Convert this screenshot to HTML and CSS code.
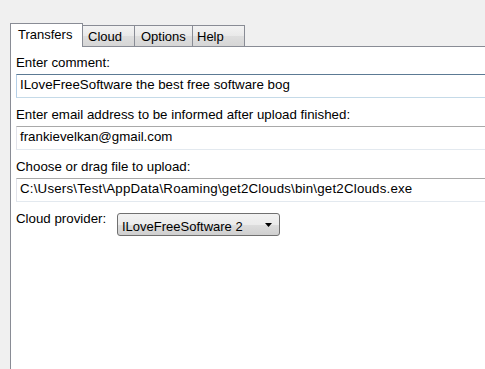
FILE: index.html
```html
<!DOCTYPE html>
<html>
<head>
<meta charset="utf-8">
<link rel="stylesheet" href="styles.css">
</head>
<body>
<div class="window">
  <div class="tabs">
    <div class="tab tab-active tab-transfers">Transfers</div>
    <div class="tab tab-cloud">Cloud</div>
    <div class="tab tab-options">Options</div>
    <div class="tab tab-help">Help</div>
  </div>
  <div class="panel">
    <div class="label">Enter comment:</div>
    <div class="field field-focus">ILoveFreeSoftware the best free software bog</div>
    <div class="label">Enter email address to be informed after upload finished:</div>
    <div class="field">frankievelkan@gmail.com</div>
    <div class="label">Choose or drag file to upload:</div>
    <div class="field field-path">C:\Users\Test\AppData\Roaming\get2Clouds\bin\get2Clouds.exe</div>
    <div class="provider-row">
      <div class="provider-label">Cloud provider:</div>
      <div class="combo">
        <span class="combo-text">ILoveFreeSoftware 2</span>
        <svg class="combo-arrow" width="7" height="4" viewBox="0 0 7 4"><path d="M0 0H7L3.5 4Z" fill="#000"/></svg>
      </div>
    </div>
  </div>
</div>
</body>
</html>
```

FILE: styles.css
```css
html, body {
  margin: 0;
  padding: 0;
  overflow: hidden;
  background: #f0f0f0;
}
body {
  font-family: "Liberation Sans", Arial, sans-serif;
  font-size: 13.3px;
  line-height: 16px;
  color: #000;
}
.window {
  height: 369px;
  padding: 23px 0 0 10px;
  box-sizing: border-box;
  display: flex;
  flex-direction: column;
}
.tabs {
  display: flex;
  align-items: flex-end;
  height: 23px;
  font-size: 13px;
}
.tab {
  box-sizing: border-box;
  height: 21px;
  padding-top: 3px;
  border-top: 1px solid #898c95;
  border-right: 1px solid #898c95;
  background: linear-gradient(#f3f3f3, #e9e9e9 50%, #dedede 51%, #d6d6d6);
  white-space: nowrap;
}
.tab-active {
  position: relative;
  height: 24px;
  margin-bottom: -1px;
  border-left: 1px solid #898c95;
  background: #fff;
  padding-left: 7px;
}
.tab-transfers { width: 73px; }
.tab-cloud { width: 52px; padding-left: 5px; }
.tab-options { width: 58px; padding-left: 6px; }
.tab-help { width: 52px; padding-left: 4px; }
.panel {
  flex: 1;
  background: #fff;
  border-top: 1px solid #898c95;
  border-left: 1px solid #898c95;
  padding: 8px 0 0 5px;
}
.label {
  height: 16px;
  margin-bottom: 3px;
  white-space: nowrap;
}
.field {
  height: 24px;
  box-sizing: border-box;
  padding: 2px 0 0 3px;
  border: 1px solid #e2e3ea;
  border-right: none;
  border-top-color: #a9a9a9;
  border-bottom-color: #e3e9ef;
  white-space: nowrap;
  overflow: hidden;
  margin-bottom: 9px;
}
.field-focus {
  border-color: #b5cfe7;
  border-top-color: #5c7a94;
  border-bottom-color: #c5dae8;
}
.field-path {
  letter-spacing: 0.2px;
}
.provider-row {
  display: flex;
  align-items: flex-start;
  gap: 8px;
}
.provider-label {
  white-space: nowrap;
  width: 93px;
}
.combo {
  margin-top: 2px;
  width: 163px;
  height: 23px;
  box-sizing: border-box;
  border: 1px solid #707070;
  border-radius: 3px;
  background: linear-gradient(#f2f2f2, #ebebeb 50%, #dddddd 51%, #cfcfcf);
  display: flex;
  align-items: flex-start;
  padding: 5px 0 0 4px;
  font-size: 13px;
}
.combo-text {
  flex: 1;
  white-space: nowrap;
}
.combo-arrow {
  margin: 4px 7px 0 0;
}
```
